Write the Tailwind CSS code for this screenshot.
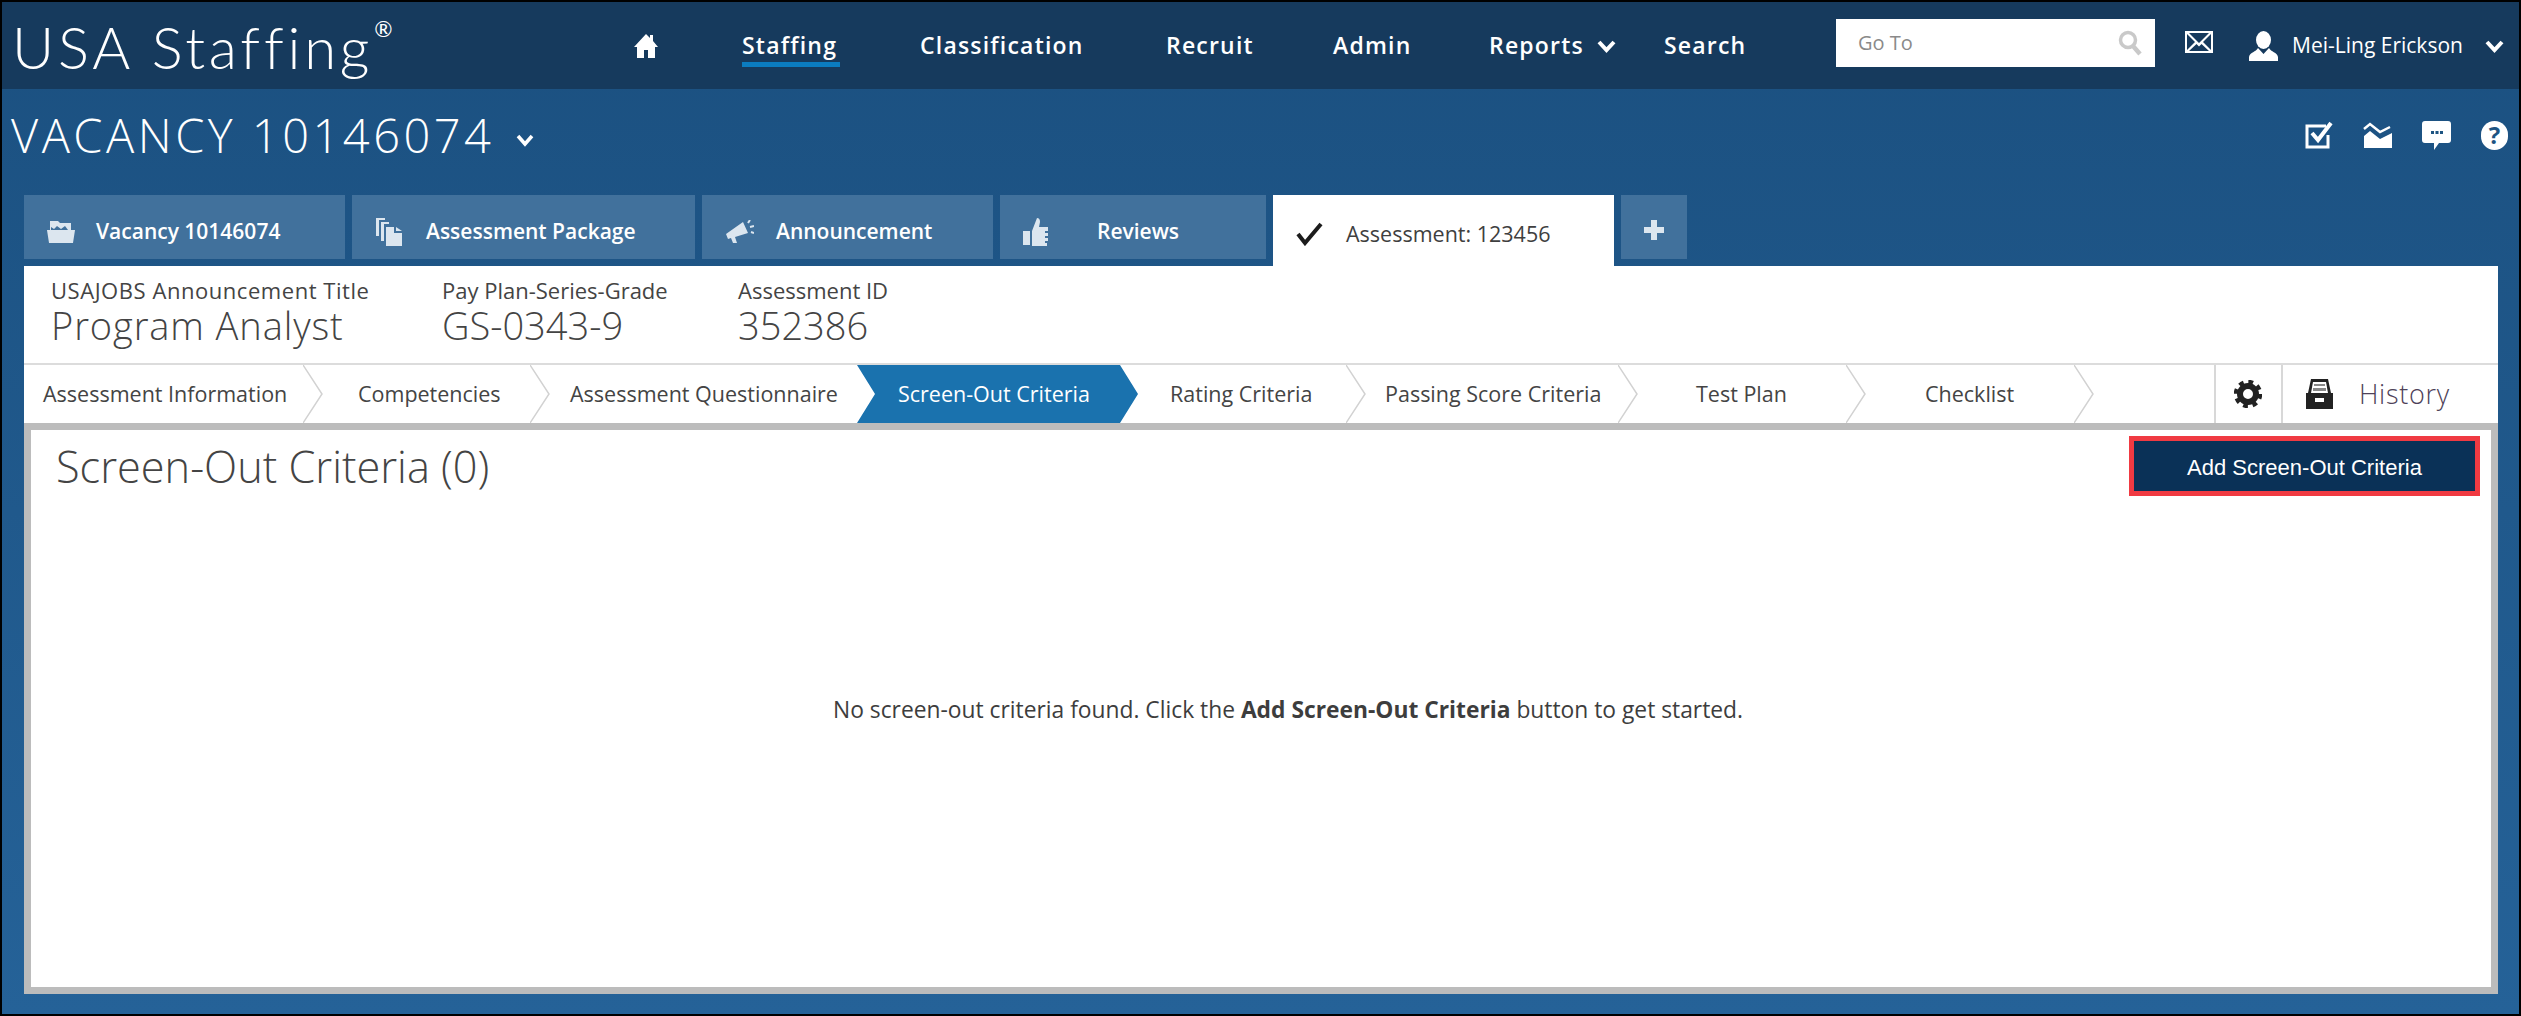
<!doctype html>
<html lang="en">
<head>
<meta charset="UTF-8">
<title>USA Staffing</title>
<script src="https://cdn.jsdelivr.net/npm/@tailwindcss/browser@4"></script>
</head>
<body class="bg-black font-['Open_Sans',sans-serif]">
<div class="w-[2521px] h-[1016px] border-2 border-black overflow-hidden flex flex-col bg-gradient-to-b from-[#1b5080] to-[#256298]">

  <!-- top nav -->
  <header class="h-[87px] shrink-0 flex items-center bg-[#163a5d] text-white">
    <div class="w-[631px] pl-[10px] pt-[3px] flex items-start font-['Lato',sans-serif] font-light text-[58px] tracking-[3.8px] leading-none">
      USA Staffing<span class="text-[22px] ml-[1px] tracking-normal font-normal">®</span>
    </div>
    <svg class="w-[26px] h-[26px]" viewBox="0 0 26 26" fill="#fff"><path d="M13 1 L17 5 V2 H20 V8 L25 14 H22 V25 H15 V17 H11 V25 H4 V14 H1 Z"/></svg>
    <div class="w-[83px]"></div>
    <nav class="flex items-center text-[23px] font-semibold tracking-[1.2px]">
      <a class="w-[178px] relative">Staffing<span class="absolute left-0 top-[34px] w-[98px] h-[5px] bg-[#0b7cc0]"></span></a>
      <a class="w-[246px]">Classification</a>
      <a class="w-[167px]">Recruit</a>
      <a class="w-[156px]">Admin</a>
      <a class="w-[175px] flex items-center">Reports
        <svg class="w-[19px] h-[14px] ml-[13px]" viewBox="0 0 19 14" fill="none" stroke="#fff" stroke-width="4"><path d="M2 3 L9.5 11 L17 3"/></svg>
      </a>
      <a class="w-[172px]">Search</a>
    </nav>
    <div class="w-[319px] h-[48px] -mt-[6px] bg-white flex items-center justify-between pl-[22px] pr-[12px] text-[20px] text-[#8a8a8a]">
      <span>Go To</span>
      <svg class="w-[26px] h-[26px]" viewBox="0 0 26 26" fill="none" stroke="#c9c9c9"><circle cx="11" cy="10" r="7.5" stroke-width="3.5"/><path d="M16 16 L23 24" stroke-width="4.5"/></svg>
    </div>
    <svg class="w-[28px] h-[22px] ml-[30px] -mt-[8px]" viewBox="0 0 28 22" fill="#fff"><path d="M0 0 H28 V22 H0 Z M2 3 V19 L10 11 Z M26 3 L18 11 L26 19 Z M4 2 L14 12 L24 2 Z M4 20 H24 L16.500 13 L14 15.500 L11.500 13 Z" fill-rule="evenodd"/></svg>
    <svg class="w-[29px] h-[30px] ml-[36px]" viewBox="0 0 29 30" fill="#fff"><ellipse cx="14.5" cy="9" rx="7.5" ry="9"/><path d="M9 17 C 7 21 1 21 0 26 V30 H29 V26 C28 21 22 21 20 17 L14.5 23 Z"/></svg>
    <span class="w-[193px] ml-[14px] text-[21px] font-medium">Mei-Ling Erickson</span>
    <svg class="w-[19px] h-[14px]" viewBox="0 0 19 14" fill="none" stroke="#fff" stroke-width="4"><path d="M2 3 L9.5 11 L17 3"/></svg>
  </header>

  <!-- vacancy title row -->
  <div class="h-[106px] shrink-0 flex justify-between pl-[9px] pr-[11px] text-white">
    <div class="flex items-center h-[92px] text-[47px] font-light tracking-[3.5px]">
      VACANCY 10146074
      <svg class="w-[18px] h-[14px] ml-[22px] mt-[10px]" viewBox="0 0 18 14" fill="none" stroke="#fff" stroke-width="3.5"><path d="M2 3 L9 11 L16 3"/></svg>
    </div>
    <div class="flex items-center gap-[30px] h-[92px]">
      <svg class="w-[28px] h-[28px]" viewBox="0 0 28 28" fill="none" stroke="#fff"><path d="M21 5 H2 V26 H23 V14" stroke-width="3"/><path d="M7 12 L13 19 L26 2" stroke-width="4"/></svg>
      <svg class="w-[29px] h-[26px]" viewBox="0 0 29 26"><path fill="#fff" d="M1 14 L7 9 L17 17 L29 11 V26 H1 Z"/><path fill="none" stroke="#fff" stroke-width="2.500" d="M1 7 L7 2 L17 10 L27 5"/></svg>
      <svg class="w-[29px] h-[29px]" viewBox="0 0 29 29"><path fill="#fff" d="M3 0 H26 Q29 0 29 3 V19 Q29 22 26 22 H17 L12 29 V22 H3 Q0 22 0 19 V3 Q0 0 3 0 Z"/><g fill="#1d5482"><rect x="9" y="10" width="3" height="3"/><rect x="13.5" y="10" width="3" height="3"/><rect x="18" y="10" width="3" height="3"/></g></svg>
      <div class="w-[27px] h-[29px] rounded-full bg-white flex items-center justify-center text-[#1d5482] text-[24px] font-bold leading-none">?</div>
    </div>
  </div>

  <!-- tabs -->
  <div class="h-[71px] shrink-0 flex items-start gap-[7px] ml-[22px] text-white text-[21px] font-semibold">
    <div class="w-[321px] h-[64px] bg-[#41719c] flex items-center pl-[23px] pt-[9px]">
      <svg class="w-[28px] h-[22px] mr-[21px]" viewBox="0 0 28 22" fill="#dce6ef"><path d="M3 0 H11 L13 2 H24 V9 H21 L18 5 L14 8 L10 5 L7 8 L4 6 V9 H3 Z"/><path d="M0 9 H28 L26 22 H2 Z"/></svg>
      Vacancy 10146074
    </div>
    <div class="w-[343px] h-[64px] bg-[#41719c] flex items-center pl-[24px] pt-[9px]">
      <svg class="w-[26px] h-[28px] mr-[24px]" viewBox="0 0 26 28" fill="#dce6ef"><path d="M0 0 H9 V2 H3 V18 H0 Z"/><path d="M5 4 H13 V6 H8 V23 H5 Z"/><path d="M10 9 H18 V15 H26 V28 H10 Z M20 9 L26 13 H20 Z"/></svg>
      Assessment Package
    </div>
    <div class="w-[291px] h-[64px] bg-[#41719c] flex items-center pl-[24px] pt-[9px]">
      <svg class="w-[28px] h-[24px] mr-[22px]" viewBox="0 0 28 24" fill="#dce6ef"><path d="M17 2 L22 13 L9 17 L11 23 H7 L5 18 L2 19 L0 14 Z"/><path d="M22 3 L24 0 M24 7 L28 6 M25 12 L28 13" stroke="#dce6ef" stroke-width="2"/></svg>
      Announcement
    </div>
    <div class="w-[266px] h-[64px] bg-[#41719c] flex items-center pl-[23px] pt-[9px]">
      <svg class="w-[25px] h-[28px] mr-[49px]" viewBox="0 0 25 28" fill="#dce6ef"><path d="M0 13 H7 V27 H0 Z"/><path d="M9 13 L14 0 Q17 0 17 4 L16 9 H25 V13 H22 V15 H25 V18 H22 V20 H25 V23 H22 V25 H24 V28 H9 Z"/></svg>
      Reviews
    </div>
    <div class="w-[341px] h-[71px] bg-white flex items-start pt-[23px] pl-[23px] text-[#3f3f3f] font-normal text-[21.5px]">
      <svg class="w-[27px] h-[24px] mr-[23px] mt-[4px]" viewBox="0 0 27 24" fill="none" stroke="#1c1c1c" stroke-width="4"><path d="M2 12 L9 21 L25 2"/></svg>
      Assessment: 123456
    </div>
    <div class="w-[66px] h-[64px] bg-[#41719c] flex items-center justify-center pt-[5px]">
      <svg class="w-[20px] h-[20px]" viewBox="0 0 20 20" fill="#dce6ef"><path d="M7 0 H13 V7 H20 V13 H13 V20 H7 V13 H0 V7 H7 Z"/></svg>
    </div>
  </div>

  <!-- white card -->
  <main class="w-[2474px] ml-[22px] bg-white text-[#444]">
    <div class="h-[99px] border-b-2 border-[#dcdcdc] flex pl-[27px] pt-[10px]">
      <div class="w-[391px]">
        <div class="text-[22px] leading-[28px] tracking-[0.55px]">USAJOBS Announcement Title</div>
        <div class="text-[38px] leading-[42px] font-light tracking-[0.9px]">Program Analyst</div>
      </div>
      <div class="w-[296px]">
        <div class="text-[22px] leading-[28px]">Pay Plan-Series-Grade</div>
        <div class="text-[38px] leading-[42px] font-light">GS-0343-9</div>
      </div>
      <div>
        <div class="text-[22px] leading-[28px]">Assessment ID</div>
        <div class="text-[38px] leading-[42px] font-light">352386</div>
      </div>
    </div>

    <!-- steps -->
    <div class="h-[58px] flex items-center text-[21.5px]">
      <div class="relative w-[279px] h-full flex items-center pl-[19px]">Assessment Information
        <svg class="absolute left-full top-0 w-[20px] h-full z-10" viewBox="0 0 20 58" fill="none" stroke="#d2d2d2" stroke-width="1.5"><path d="M0 0 L19 29 L0 58"/></svg>
      </div>
      <div class="relative w-[227px] h-full flex items-center pl-[55px]">Competencies
        <svg class="absolute left-full top-0 w-[20px] h-full z-10" viewBox="0 0 20 58" fill="none" stroke="#d2d2d2" stroke-width="1.5"><path d="M0 0 L19 29 L0 58"/></svg>
      </div>
      <div class="w-[327px] h-full flex items-center pl-[40px]">Assessment Questionnaire</div>
      <div class="relative z-10 w-[281px] -mr-[18px] h-full flex items-center pl-[41px] bg-[#1a72ae] text-white [clip-path:polygon(0_0,263px_0,281px_50%,263px_100%,0_100%,18px_50%)]">Screen-Out Criteria</div>
      <div class="relative w-[226px] h-full flex items-center pl-[50px]">Rating Criteria
        <svg class="absolute left-full top-0 w-[20px] h-full z-10" viewBox="0 0 20 58" fill="none" stroke="#d2d2d2" stroke-width="1.5"><path d="M0 0 L19 29 L0 58"/></svg>
      </div>
      <div class="relative w-[272px] h-full flex items-center pl-[39px]">Passing Score Criteria
        <svg class="absolute left-full top-0 w-[20px] h-full z-10" viewBox="0 0 20 58" fill="none" stroke="#d2d2d2" stroke-width="1.5"><path d="M0 0 L19 29 L0 58"/></svg>
      </div>
      <div class="relative w-[228px] h-full flex items-center pl-[78px]">Test Plan
        <svg class="absolute left-full top-0 w-[20px] h-full z-10" viewBox="0 0 20 58" fill="none" stroke="#d2d2d2" stroke-width="1.5"><path d="M0 0 L19 29 L0 58"/></svg>
      </div>
      <div class="relative w-[228px] h-full flex items-center pl-[79px]">Checklist
        <svg class="absolute left-full top-0 w-[20px] h-full z-10" viewBox="0 0 20 58" fill="none" stroke="#d2d2d2" stroke-width="1.5"><path d="M0 0 L19 29 L0 58"/></svg>
      </div>
      <div class="w-[140px]"></div>
      <div class="w-[67px] h-full border-l-2 border-[#d8d8d8] flex items-center justify-center">
        <svg class="w-[28px] h-[28px] -ml-[2px]" viewBox="0 0 28 28" fill="none" stroke="#222"><circle cx="14" cy="14" r="8" stroke-width="6"/><circle cx="14" cy="14" r="12" stroke-width="4.5" stroke-dasharray="4.700 4.725"/></svg>
      </div>
      <div class="flex-1 h-full border-l-2 border-[#d8d8d8] flex items-center pl-[23px]">
        <svg class="w-[27px] h-[30px] mr-[26px]" viewBox="0 0 27 30"><path fill="#222" d="M5 0 H22 L25 14 H27 V30 H0 V14 H2 Z"/><path fill="#fff" d="M7 3 H20 L22 14 H5 Z"/><path fill="#888" d="M8 5 H19 V7 H8 Z M7 9 H20 V12 H7 Z"/><rect fill="#fff" x="9" y="19" width="9" height="4"/></svg>
        <span class="text-[27px] font-light text-[#4e4258] tracking-[0.7px]">History</span>
      </div>
    </div>

    <!-- panel -->
    <div class="h-[571px] border-[7px] border-[#bcbcbc]">
      <div class="flex justify-between items-start pl-[25px] pr-[11px] pt-[6px]">
        <h1 class="text-[43.3px] leading-[60px] mt-[1px] font-light text-[#444]">Screen-Out Criteria (0)</h1>
        <button class="w-[351px] h-[60px] border-[5px] border-[#f03a42] bg-[#0a3157] text-white font-['Liberation_Sans',sans-serif] text-[22px] pt-[2px]">Add Screen-Out Criteria</button>
      </div>
      <p class="ml-[802px] mt-[198px] text-[22.8px] leading-[30px] text-[#3d3d3d]">No screen-out criteria found. Click the <strong class="font-bold">Add Screen-Out Criteria</strong> button to get started.</p>
    </div>
  </main>
</div>
</body>
</html>
